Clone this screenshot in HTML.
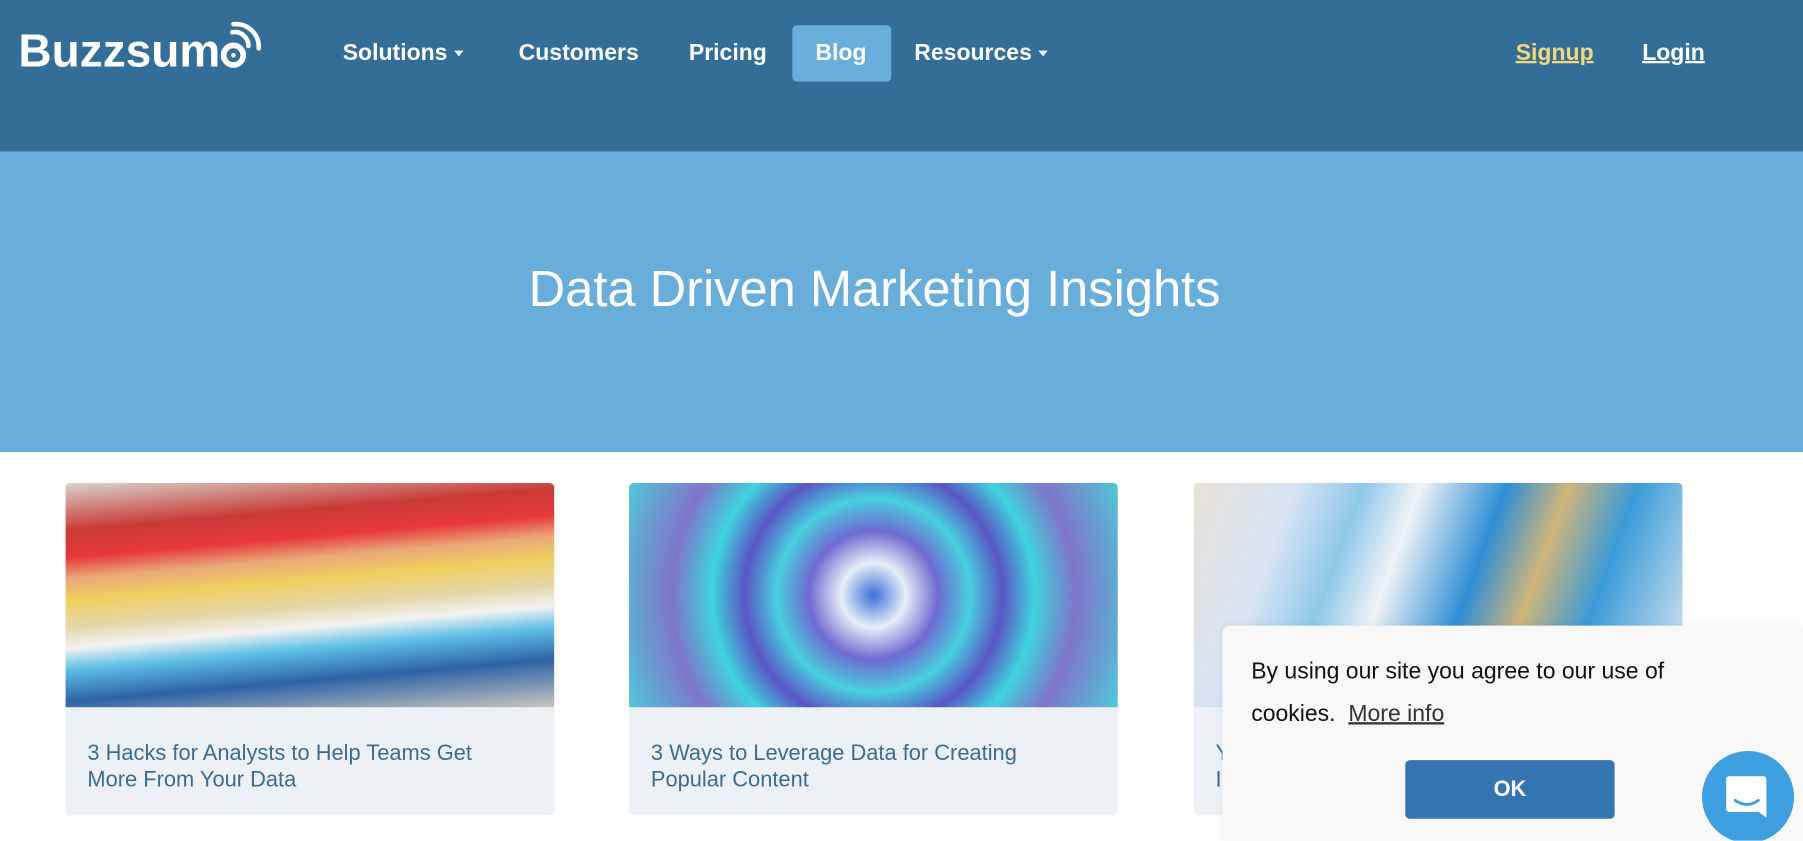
<!DOCTYPE html>
<html><head><meta charset="utf-8"><style>
html,body{margin:0;padding:0;width:1803px;height:841px;overflow:hidden;background:#fff}
#w{position:absolute;left:0;top:0;width:1568px;height:731px;transform:scale(1.15);transform-origin:0 0;font-family:"Liberation Sans",Arial,sans-serif;overflow:hidden}
.a{position:absolute}
.nav{left:0;top:0;width:1568px;height:132px;background:#336e99}
.ni{position:absolute;top:34px;color:#fff;font-weight:bold;font-size:20px;line-height:24px}
.car{display:inline-block;width:0;height:0;border-left:4px solid transparent;border-right:4px solid transparent;border-top:5px solid #fff;vertical-align:middle;margin-left:6px}
.hero{left:0;top:132px;width:1568px;height:261px;background:#69aedb}
.card{position:absolute;top:420px;width:425px;height:289px;border-radius:4px;overflow:hidden;background:#edf1f5}
.card .img{height:195px}
.card .t{padding:29px 30px 0 19px;color:#3b6d93;font-size:19px;line-height:23px}
</style></head><body><div id="w">
<div class="a nav"></div>
<div class="a" style="left:16px;top:21px;color:#fff;font-weight:bold;font-size:40px;line-height:48px">Buzzsum<span style="display:inline-block;width:22px;height:22px;border:5px solid #fff;border-radius:50%;box-sizing:border-box;position:relative;vertical-align:-1px"><span style="position:absolute;left:4px;top:4px;width:4px;height:4px;background:#fff;border-radius:50%"></span></span></div>
<svg class="a" style="left:198px;top:18px" width="34" height="34" viewBox="0 0 34 34"><path d="M4 10 A12 12 0 0 1 18 22" fill="none" stroke="#fff" stroke-width="4" stroke-linecap="round"/><path d="M5 3 A20 20 0 0 1 27 24" fill="none" stroke="#fff" stroke-width="4" stroke-linecap="round"/></svg>
<div class="ni" style="left:298px">Solutions<span class="car"></span></div>
<div class="ni" style="left:451px">Customers</div>
<div class="ni" style="left:599px">Pricing</div>
<div class="a" style="left:689px;top:22px;width:86px;height:49px;background:#6aafdc;border-radius:4px"></div>
<div class="ni" style="left:709px">Blog</div>
<div class="ni" style="left:795px">Resources<span class="car"></span></div>
<div class="ni" style="left:1318px;color:#f4d77c;text-decoration:underline">Signup</div>
<div class="ni" style="left:1428px;text-decoration:underline">Login</div>
<div class="a hero"></div>
<div class="a" style="left:0;top:225px;width:1521px;text-align:center;color:#fff;font-size:44px;line-height:54px">Data Driven Marketing Insights</div>
<div class="card" style="left:57px"><div class="img" style="background:linear-gradient(175deg,#d8d4cc 0%,#c93a35 18%,#e8383a 28%,#e9a87a 36%,#f0cf5e 44%,#e5d6a8 54%,#f2f2f2 62%,#5fc0e6 70%,#2e63a6 82%,#c9c6bf 100%)"></div><div class="t">3 Hacks for Analysts to Help Teams Get More From Your Data</div></div>
<div class="card" style="left:547px"><div class="img" style="background:radial-gradient(circle at 50% 50%,#3b70d8 0,#e6eef8 12%,#6f6ad0 24%,#48d0e0 36%,#5a55c4 48%,#3fd4de 60%,#7f75c8 75%,#50c8d8 100%)"></div><div class="t">3 Ways to Leverage Data for Creating Popular Content</div></div>
<div class="card" style="left:1038px"><div class="img" style="background:linear-gradient(110deg,#e8e2d8 0%,#d7e4f4 18%,#8fc8ea 30%,#f0f3f6 40%,#2f8ed6 55%,#d0b57a 66%,#3a9bd8 78%,#e8eef4 100%)"></div><div class="t">Y<br>I</div></div>
<div class="a" style="left:1063px;top:544px;width:505px;height:200px;background:#f8f8f8;border-radius:6px 0 0 0;box-shadow:0 0 8px rgba(0,0,0,.06)"></div>
<div class="a" style="left:1088px;top:566px;color:#111;font-size:20px;line-height:37px">By using our site you agree to our use of<br>cookies.&nbsp; <span style="color:#333;text-decoration:underline">More info</span></div>
<div class="a" style="left:1222px;top:661px;width:182px;height:51px;background:#3474b0;border-radius:4px;color:#fff;font-weight:bold;font-size:19px;line-height:51px;text-align:center">OK</div>
<div class="a" style="left:1480px;top:653px;width:80px;height:80px;border-radius:50%;background:#3d9fe0"></div>
<svg class="a" style="left:1500px;top:673px" width="40" height="40" viewBox="0 0 40 40"><path d="M4 2 H33 Q36 2 36 5 V38 L29 33 H4 Q1 33 1 30 V5 Q1 2 4 2Z" fill="#fff"/><path d="M9 23 Q19 30 29 23" fill="none" stroke="#3d9fe0" stroke-width="2.5" stroke-linecap="round"/></svg>
</div></body></html>
